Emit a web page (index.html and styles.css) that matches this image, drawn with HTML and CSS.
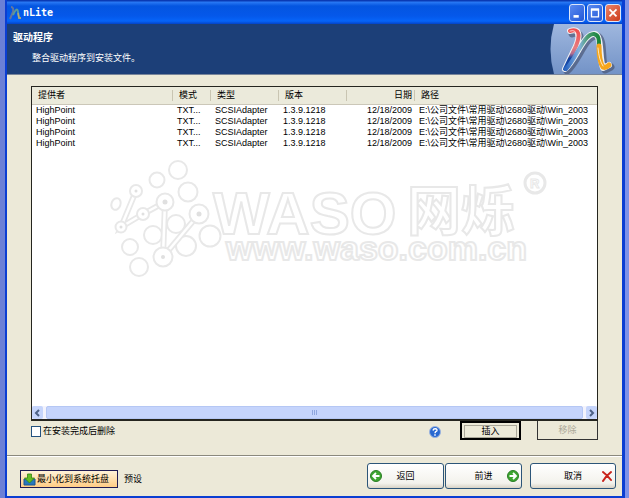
FILE: index.html
```html
<!DOCTYPE html>
<html lang="zh-CN">
<head>
<meta charset="utf-8">
<title>nLite</title>
<link rel="stylesheet" href="styles.css">
</head>
<body>
<div class="window">
  <header class="titlebar">
    <svg class="app-icon" viewBox="0 0 12 14" aria-hidden="true">
      <path d="M2 1q3 0 2 5l-3 7" fill="none" stroke="#64769c" stroke-width="2"/>
      <path d="M4 9q4-9 5-3l1 6h2" fill="none" stroke="#5a9a9a" stroke-width="2"/>
      <path d="M9 7l1 5h2" fill="none" stroke="#b5a878" stroke-width="1.5"/>
    </svg>
    <h1 class="app-name">nLite</h1>
    <button class="win-btn" aria-label="最小化"><svg viewBox="0 0 16 18"><path d="M4 13h6" stroke="#fff" stroke-width="3"/></svg></button>
    <button class="win-btn" aria-label="最大化"><svg viewBox="0 0 16 18"><path d="M4 5.500h8v8H4z" fill="none" stroke="#fff" stroke-width="1.500"/><path d="M3.300 5h9.400" stroke="#fff" stroke-width="2.500"/></svg></button>
    <button class="win-btn win-close" aria-label="关闭"><svg viewBox="0 0 16 18"><path d="M4 5l8 8M12 5l-8 8" stroke="#fff" stroke-width="2"/></svg></button>
  </header>

  <section class="banner">
    <div class="banner-text">
      <h2>驱动程序</h2>
      <p>整合驱动程序到安装文件。</p>
    </div>
    <svg class="logo" viewBox="0 0 72 50" aria-hidden="true">
      <defs>
        <linearGradient id="sky" x1="0" y1="0" x2="0" y2="1"><stop offset="0" stop-color="#9fb7de"/><stop offset="1" stop-color="#7393c7"/></linearGradient>
        <linearGradient id="stem" x1="0" y1="0" x2="0" y2="1"><stop offset="0" stop-color="#f05050"/><stop offset=".45" stop-color="#e87c80"/><stop offset=".6" stop-color="#b06d8f"/><stop offset=".72" stop-color="#12409c"/><stop offset="1" stop-color="#1b55b8"/></linearGradient>
        <linearGradient id="arch" x1="0" y1="0" x2="1" y2="0"><stop offset="0" stop-color="#2c67c2"/><stop offset=".4" stop-color="#86b4e0"/><stop offset=".65" stop-color="#4a9b71"/><stop offset="1" stop-color="#18853a"/></linearGradient>
      </defs>
      <path d="M4 0Q-3 25 4 50H72V0z" fill="url(#sky)"/>
      <g fill="none" stroke-linecap="round" stroke-linejoin="round">
        <path d="M21 9C30 6 31 12 27 22L16 46C28 36 34 10 46 11C54 13 50 35 54 45L60 42" stroke="#46526e" stroke-width="7" opacity=".65" transform="translate(1 1)"/>
        <path d="M20 7C30 4 30 12 26 22L15 45C26 36 34 8 45 10C52 12 49 34 53 44L59 41" stroke="#eef1f4" stroke-width="6"/>
        <path d="M20 7C30 4 30 12 26 22L15 45" stroke="url(#stem)" stroke-width="4"/>
        <path d="M16 45C26 35 34 9 44 10C49 11 49 16 49 21" stroke="url(#arch)" stroke-width="4"/>
        <path d="M49 22C49 31 50 39 53 43C55 44 57 43 59 41" stroke="#f5a51c" stroke-width="5"/>
        <path d="M20 7Q27 5 26 12M48 24Q49 36 53 42" stroke="#fff" stroke-width="1" opacity=".7"/>
      </g>
    </svg>
  </section>

  <main class="content">
    <div class="list">
      <table class="drivers">
        <colgroup><col class="c-vendor"><col class="c-mode"><col class="c-type"><col class="c-version"><col class="c-date"><col></colgroup>
        <thead><tr><th>提供者</th><th>模式</th><th>类型</th><th>版本</th><th class="right">日期</th><th>路径</th></tr></thead>
        <tbody>
          <tr><td>HighPoint</td><td>TXT...</td><td>SCSIAdapter</td><td>1.3.9.1218</td><td class="right">12/18/2009</td><td>E:\公司文件\常用驱动\2680驱动\Win_2003</td></tr>
          <tr><td>HighPoint</td><td>TXT...</td><td>SCSIAdapter</td><td>1.3.9.1218</td><td class="right">12/18/2009</td><td>E:\公司文件\常用驱动\2680驱动\Win_2003</td></tr>
          <tr><td>HighPoint</td><td>TXT...</td><td>SCSIAdapter</td><td>1.3.9.1218</td><td class="right">12/18/2009</td><td>E:\公司文件\常用驱动\2680驱动\Win_2003</td></tr>
          <tr><td>HighPoint</td><td>TXT...</td><td>SCSIAdapter</td><td>1.3.9.1218</td><td class="right">12/18/2009</td><td>E:\公司文件\常用驱动\2680驱动\Win_2003</td></tr>
        </tbody>
      </table>
      <svg class="watermark" viewBox="0 0 440 124">
        <g fill="#fff" stroke="#e8e8e8" stroke-width="2">
          <circle cx="69" cy="14" r="9"/><circle cx="48" cy="24" r="7.500"/><circle cx="79" cy="36" r="9.500"/>
          <ellipse cx="7" cy="48" rx="4.500" ry="6" transform="rotate(20 7 48)"/>
          <circle cx="67" cy="68" r="9"/><circle cx="44" cy="79" r="9"/><circle cx="101" cy="80" r="10.500"/>
          <circle cx="21" cy="91" r="8"/><circle cx="77" cy="90" r="10"/><circle cx="30" cy="111" r="9"/>
        </g>
        <g fill="none" stroke-linecap="round">
          <path d="M27 35L12 71L34 58L56 46M56 46L54 101L90 58" stroke="#e8e8e8" stroke-width="6"/>
          <path d="M27 35L12 71L34 58L56 46M56 46L54 101L90 58" stroke="#fff" stroke-width="2.500"/>
        </g>
        <g fill="#fff" stroke="#e8e8e8" stroke-width="2">
          <circle cx="27" cy="35" r="6"/><circle cx="12" cy="71" r="5.500"/><circle cx="34" cy="58" r="6"/><circle cx="56" cy="46" r="8.500"/><circle cx="90" cy="58" r="9.500"/><circle cx="54" cy="101" r="9.500"/>
        </g>
        <g fill="#e0e0e0"><circle cx="27" cy="35" r="1.500"/><circle cx="12" cy="71" r="1.500"/><circle cx="34" cy="58" r="1.500"/><circle cx="56" cy="46" r="2.500"/><circle cx="90" cy="58" r="2.500"/><circle cx="54" cy="101" r="2"/></g>
        <text class="wm-name" x="104" y="78">WASO</text>
        <text class="wm-cjk" x="298" y="75">网烁</text>
        <text class="wm-url" x="117" y="104">www.waso.com.cn</text>
        <circle cx="426" cy="27" r="10" fill="none" stroke="#e8e8e8" stroke-width="3"/>
        <text class="wm-mark" x="421" y="32">R</text>
      </svg>
      <div class="scrollbar">
        <button class="scroll-btn" aria-label="向左滚动"><svg viewBox="0 0 11 12"><path d="M7 3L4 6l3 3" fill="none" stroke="#4d6185" stroke-width="2"/></svg></button>
        <div class="thumb"><i class="grip"></i></div>
        <button class="scroll-btn" aria-label="向右滚动"><svg viewBox="0 0 11 12"><path d="M4 3l3 3-3 3" fill="none" stroke="#4d6185" stroke-width="2"/></svg></button>
      </div>
    </div>
    <div class="options">
      <label class="check"><input type="checkbox">在安装完成后删除</label>
      <button class="help" aria-label="帮助"><svg viewBox="0 0 12 12"><circle cx="6" cy="6" r="5.500" fill="#2868d0" stroke="#9cb4de"/><path d="M4 4.500Q4.500 2.500 6.300 2.700Q8.500 3 7.800 4.800Q6 5.800 6 7.200M6 8.300v1.500" fill="none" stroke="#fff" stroke-width="1.500"/></svg></button>
      <button class="flat insert"><span>插入</span></button>
      <button class="flat remove" disabled>移除</button>
    </div>
  </main>

  <footer class="footer">
    <button class="tray"><svg viewBox="0 0 13 13"><path d="M1 6h3l2 3 3-3h3v6H1z" fill="#2678bd" stroke="#1c5590"/><path d="M4.500 1h4v4h3L6.500 10 1.500 5h3z" fill="#66bd25" stroke="#338712" stroke-width=".8"/></svg>最小化到系统托盘</button>
    <a class="preset" href="#">预设</a>
    <button class="nav back"><svg viewBox="0 0 12 12"><circle cx="6" cy="6" r="5.500" fill="#3da52f" stroke="#2a7d26"/><path d="M9.500 6H3M6 3L3 6l3 3" fill="none" stroke="#fff" stroke-width="1.800"/></svg><span>返回</span></button>
    <button class="nav next"><span>前进</span><svg viewBox="0 0 12 12"><circle cx="6" cy="6" r="5.500" fill="#3da52f" stroke="#2a7d26"/><path d="M2.500 6H9M6 3l3 3-3 3" fill="none" stroke="#fff" stroke-width="1.800"/></svg></button>
    <button class="nav cancel"><span>取消</span><svg viewBox="0 0 12 12"><path d="M2 2q4 3 8 8M10 2q-5 4-8 9" fill="none" stroke="#c9241c" stroke-width="2" stroke-linecap="round"/></svg></button>
  </footer>
</div>
</body>
</html>
```
FILE: styles.css
```css
* { box-sizing: border-box; }

body {
  margin: 0;
  height: 100vh;
  padding: 0 4px 0 5px;
  background: linear-gradient(90deg, #6b80d6, #7d92e8);
  font: 9px/11px "Liberation Sans", "Noto Sans CJK SC", sans-serif;
  color: #000;
}

button {
  margin: 0;
  padding: 0;
  border: 0;
  background: none;
  font: inherit;
  color: inherit;
}

svg { display: block; }

.window {
  display: flex;
  flex-direction: column;
  height: 100%;
  border: solid #0b3ed2;
  border-width: 0 3px 2px 2px;
  background: #ece9d8;
}

.titlebar {
  display: flex;
  align-items: center;
  gap: 2px;
  height: 24px;
  padding: 2px 1px 0 2px;
  background: linear-gradient(#0a3ab4 0, #0a3ab4 1px, #2a7af5 2px, #0455e0 6px, #0558ea 16px, #0664f8 21px, #0343c8 24px);
}

.app-icon { width: 12px; height: 14px; }

.app-name {
  flex: 1;
  margin: 0;
  font: bold 10px/14px "DejaVu Sans Mono", monospace;
  color: #fff;
}

.win-btn {
  width: 16px;
  height: 18px;
  border: 1px solid #dce6fa;
  border-radius: 3px;
  background: linear-gradient(135deg, #5a8af0, #2257d8);
}

.win-close { background: linear-gradient(135deg, #ec8368, #cc3c1c); }

.banner {
  display: flex;
  justify-content: space-between;
  height: 51px;
  border-bottom: 1px solid #78859a;
  background: #1c3f78;
  color: #fff;
}

.banner-text { padding: 8px 6px; }

.banner h2 {
  margin: 0 0 10px;
  font-size: 10px;
  line-height: 11px;
}

.banner p { margin: 0 0 0 19px; }

.logo { width: 72px; height: 50px; }

.content {
  display: flex;
  flex: 1;
  flex-direction: column;
  padding: 11px 24px 15px;
}

.list {
  position: relative;
  display: flex;
  flex: 1;
  flex-direction: column;
  justify-content: space-between;
  border: 1px solid #25251f;
  border-bottom-width: 2px;
  background: #fff;
}

.drivers {
  width: 100%;
  table-layout: fixed;
  border-collapse: collapse;
}

.c-vendor { width: 141px; }
.c-mode { width: 38px; }
.c-type, .c-version, .c-date { width: 68px; }

th {
  height: 17px;
  padding: 0 3px 0 6px;
  border-bottom: 1px solid #cbc7b8;
  background: linear-gradient(90deg, #c9c5b2, #c9c5b2) right center / 1px 11px no-repeat #ebeadb;
  font-weight: normal;
  text-align: left;
}

th:last-child { background: #ebeadb; }

td {
  height: 11px;
  padding: 0 3px 0 4px;
  line-height: 11px;
  white-space: nowrap;
}

th.right, td.right { text-align: right; }

.watermark {
  position: absolute;
  top: 69px;
  left: 77px;
  width: 440px;
  height: 124px;
}

.wm-name, .wm-cjk, .wm-url, .wm-mark {
  fill: #fff;
  stroke: #e8e8e8;
  stroke-width: 2px;
  font-family: "Liberation Sans", "Noto Sans CJK SC", sans-serif;
  font-weight: bold;
}

.wm-name { font-size: 60px; }
.wm-cjk { font-size: 54px; }
.wm-url { font-size: 34px; }
.wm-mark { font-size: 13px; stroke-width: 1px; }

.scrollbar {
  display: flex;
  gap: 3px;
  height: 13px;
  background: #f3f3fc;
}

.scroll-btn {
  width: 11px;
  border-radius: 2px;
  background: #c6d5fb;
}

.thumb {
  display: flex;
  flex: 1;
  align-items: center;
  justify-content: center;
  border: 1px solid #b5c7f4;
  border-radius: 2px;
  background: #c5d4fc;
}

.grip {
  width: 5px;
  height: 5px;
  background: repeating-linear-gradient(90deg, #8fa6de 0 1px, transparent 1px 2px);
}

.options { display: flex; height: 19px; }

.check {
  display: flex;
  flex: 1;
  align-items: center;
  gap: 2px;
  padding-top: 2px;
}

.check input {
  appearance: none;
  width: 10px;
  height: 11px;
  margin: 0;
  border: 1px solid #24527f;
  background: #fff;
}

.help { width: 12px; margin-right: 19px; padding-top: 2px; }

.flat { width: 61px; border: 1px solid #333; border-top: 0; }

.insert { padding: 2px; border: 2px solid #000; }

.insert span {
  display: block;
  border: 1px solid #aaa799;
}

.remove { margin-left: 16px; color: #aaa797; }

.footer {
  display: flex;
  align-items: flex-end;
  height: 41px;
  padding: 0 6px 7px 13px;
  border-top: 1px solid #8b897d;
  box-shadow: inset 0 1px #fff;
}

.tray {
  display: flex;
  align-items: center;
  gap: 1px;
  width: 98px;
  height: 18px;
  margin-bottom: 1px;
  padding-left: 2px;
  border: 1px solid #201b52;
  background: linear-gradient(#fff2d8, #ffcd85);
}

.tray svg { width: 13px; height: 13px; }

.preset {
  flex: 1;
  margin: 0 0 1px 6px;
  line-height: 18px;
  color: inherit;
  text-decoration: none;
}

.nav {
  display: grid;
  grid-template-columns: 12px 1fr 12px;
  align-items: center;
  width: 77px;
  height: 26px;
  padding: 0 2px;
  border: 1px solid #2c5578;
  border-radius: 3px;
  background: linear-gradient(#fff, #f3f2ec 80%, #d8d3c6);
}

.nav span { grid-column: 2; }
.nav svg { width: 12px; height: 12px; }
.next { margin: 0 8px 0 1px; }
.cancel { width: 86px; }
```
